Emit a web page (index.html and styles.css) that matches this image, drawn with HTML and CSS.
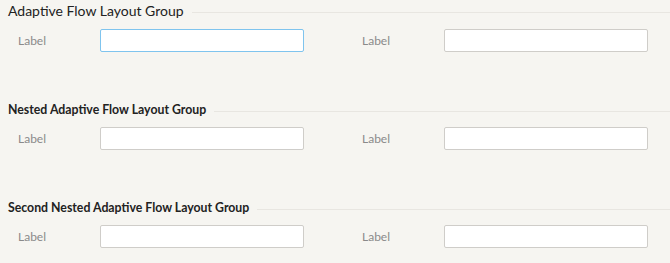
FILE: index.html
```html
<!DOCTYPE html>
<html lang="en">

<head>
  <title>Adaptive Flow Layout</title>
  <meta charset="utf-8" />
  <link rel="stylesheet" href="styles.css">
</head>

<body>
  <div class="page">
    <section class="group">
      <div class="groupHead">Adaptive Flow Layout Group</div>
      <div class="row">
        <div class="field"><label>Label</label><input class="input focused" type="text" autofocus></div>
        <div class="field"><label>Label</label><input class="input" type="text"></div>
      </div>
    </section>
    <section class="group nested">
      <div class="groupHead">Nested Adaptive Flow Layout Group</div>
      <div class="row">
        <div class="field"><label>Label</label><input class="input" type="text"></div>
        <div class="field"><label>Label</label><input class="input" type="text"></div>
      </div>
    </section>
    <section class="group nested">
      <div class="groupHead">Second Nested Adaptive Flow Layout Group</div>
      <div class="row">
        <div class="field"><label>Label</label><input class="input" type="text"></div>
        <div class="field"><label>Label</label><input class="input" type="text"></div>
      </div>
    </section>
  </div>
</body>

</html>
```

FILE: styles.css
```css
html,
body {
  height: 100%;
  margin: 0;
}

body {
  background-color: #f6f5f1;
  font-family: Lato, "Open Sans", sans-serif;
  color: #222;
}

.page {
  padding: 2px 0 0 8px;
}

.groupHead {
  display: flex;
  align-items: center;
  gap: 8px;
  font-size: 14px;
  line-height: 18px;
  white-space: nowrap;
}

.groupHead::after {
  content: "";
  flex: 1;
  height: 1px;
  margin-top: 3px;
  background-color: #e8e6e1;
}

.nested {
  margin-top: 50px;
}

.nested .groupHead {
  font-size: 12.3px;
  font-weight: bold;
  line-height: 16px;
}

.row {
  display: flex;
  margin-top: 9px;
}

.field {
  display: flex;
  align-items: center;
  width: 344px;
  flex: none;
  padding-left: 10px;
  box-sizing: border-box;
}

.field label {
  width: 82px;
  font-size: 12px;
  color: #8a8a8a;
}

.input {
  width: 204px;
  height: 23px;
  box-sizing: border-box;
  margin: 0;
  border: 1px solid #cfcdc9;
  border-radius: 2px;
  background: white;
  outline: none;
  font: inherit;
}

.input.focused,
.input:focus {
  border-color: #7fc4ee;
}
```
